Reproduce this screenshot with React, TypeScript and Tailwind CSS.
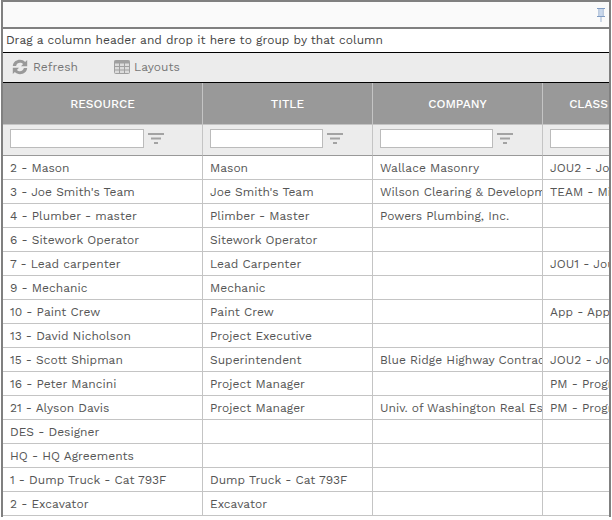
const rows = [
  ["2 - Mason", "Mason", "Wallace Masonry", "JOU2 - Journeyman"],
  ["3 - Joe Smith's Team", "Joe Smith's Team", "Wilson Clearing & Development", "TEAM - Mixed"],
  ["4 - Plumber - master", "Plimber - Master", "Powers Plumbing, Inc.", ""],
  ["6 - Sitework Operator", "Sitework Operator", "", ""],
  ["7 - Lead carpenter", "Lead Carpenter", "", "JOU1 - Journeyman"],
  ["9 - Mechanic", "Mechanic", "", ""],
  ["10 - Paint Crew", "Paint Crew", "", "App - Apprentice"],
  ["13 - David Nicholson", "Project Executive", "", ""],
  ["15 - Scott Shipman", "Superintendent", "Blue Ridge Highway Contractors", "JOU2 - Journeyman"],
  ["16 - Peter Mancini", "Project Manager", "", "PM - Program"],
  ["21 - Alyson Davis", "Project Manager", "Univ. of Washington Real Estate", "PM - Program"],
  ["DES - Designer", "", "", ""],
  ["HQ - HQ Agreements", "", "", ""],
  ["1 - Dump Truck - Cat 793F", "Dump Truck - Cat 793F", "", ""],
  ["2 - Excavator", "Excavator", "", ""],
];

const columns = [
  { label: "RESOURCE", width: "w-[200px]", input: "w-[134px]" },
  { label: "TITLE", width: "w-[170px]", input: "w-[113px]" },
  { label: "COMPANY", width: "w-[170px]", input: "w-[113px]" },
  { label: "CLASS", width: "w-[92px]", input: "w-[113px]" },
];

function FilterIcon() {
  return (
    <svg width="16" height="11" viewBox="0 0 16 11" className="mt-[4px] shrink-0 text-[#a3a3a3]">
      <rect x="0" y="0" width="16" height="2" fill="currentColor" />
      <rect x="3" y="4.5" width="10" height="2" fill="currentColor" />
      <rect x="6" y="9" width="4" height="2" fill="currentColor" />
    </svg>
  );
}

function PinIcon() {
  return (
    <svg width="8" height="14" viewBox="0 0 8 14">
      <path d="M0 .5h8M2 1v7M6 1v7M0 8.5h8" stroke="#7f9cc4" fill="none" />
      <rect x="2.5" y="1" width="3" height="7" fill="#c9d8ec" />
      <path d="M4 9v5" stroke="#9fb4d2" />
    </svg>
  );
}

function RefreshIcon() {
  return (
    <svg width="16" height="16" viewBox="0 0 16 16" className="text-[#999]">
      <path
        d="M.8 7 C1.3 3 4.2.8 8 .8 C10.1.8 11.8 1.6 13.1 2.9 L15.2.9 V7.2 H9 L11.1 5.1 C10.3 4.3 9.2 3.8 8 3.8 C6 3.8 4.6 5 4.1 7 Z"
        fill="currentColor"
      />
      <path
        d="M15.2 9 C14.7 13 11.8 15.2 8 15.2 C5.9 15.2 4.2 14.4 2.9 13.1 L.8 15.1 V8.8 H7 L4.9 10.9 C5.7 11.7 6.8 12.2 8 12.2 C10 12.2 11.4 11 11.9 9 Z"
        fill="currentColor"
      />
    </svg>
  );
}

function GridIcon() {
  return (
    <svg width="16" height="14" viewBox="0 0 16 14" className="text-[#a0a0a0]">
      <rect x="0.5" y="0.5" width="15" height="13" rx="1" fill="#dcdcdc" stroke="currentColor" />
      <rect x="0.5" y="0.5" width="15" height="3" fill="currentColor" />
      <path d="M5.5 3v10M10.5 3v10M1 6.5h14M1 10h14" stroke="currentColor" fill="none" />
    </svg>
  );
}

export default function App() {
  return (
    <div className="h-[520px] w-[612px] overflow-hidden bg-white font-['Work_Sans','Open_Sans',sans-serif] text-[12px] tracking-[0.03px] text-[#555]">
      <div className="ml-[1px] h-[517px] w-[610px] overflow-hidden border-t-2 border-r-2 border-l-2 border-[#808080]">
        <div className="flex h-[27px] items-center justify-end border-b-2 border-[#808080] bg-[#fafafa] pr-[4px]">
          <PinIcon />
        </div>
        <div className="flex h-[24px] items-center border-b border-black pb-[2px] pl-[3px] text-[#444]">
          Drag a column header and drop it here to group by that column
        </div>
        <div className="flex h-[30px] items-center gap-[36px] border-b border-black bg-[#ececec] pb-[2px] pl-[9px] text-[#777]">
          <span className="flex items-center gap-[5px]">
            <RefreshIcon />
            Refresh
          </span>
          <span className="flex items-center gap-[4px]">
            <GridIcon />
            Layouts
          </span>
        </div>
        <div className="flex w-max">
          {columns.map((col) => (
            <div
              key={col.label}
              className={`${col.width} flex h-[42px] shrink-0 items-center justify-center border-r border-b border-[#c4c4c4] bg-[#999] font-medium tracking-normal text-white`}
            >
              {col.label}
            </div>
          ))}
        </div>
        <div className="flex w-max">
          {columns.map((col) => (
            <div
              key={col.label}
              className={`${col.width} flex h-[31px] shrink-0 items-start gap-[4px] border-r border-b border-r-[#c4c4c4] border-b-[#999] bg-[#ececec] pt-[4px] pl-[7px]`}
            >
              <input className={`${col.input} h-[19px] shrink-0 border border-[#bbb] bg-white`} />
              <FilterIcon />
            </div>
          ))}
        </div>
        {rows.map((row) => (
          <div key={row[0]} className="flex w-max">
            {row.map((cell, i) => (
              <div
                key={i}
                className={`${columns[i].width} flex h-[24px] shrink-0 items-center overflow-hidden border-r border-b border-[#c4c4c4] pl-[7px] whitespace-nowrap`}
              >
                {cell}
              </div>
            ))}
          </div>
        ))}
      </div>
    </div>
  );
}
